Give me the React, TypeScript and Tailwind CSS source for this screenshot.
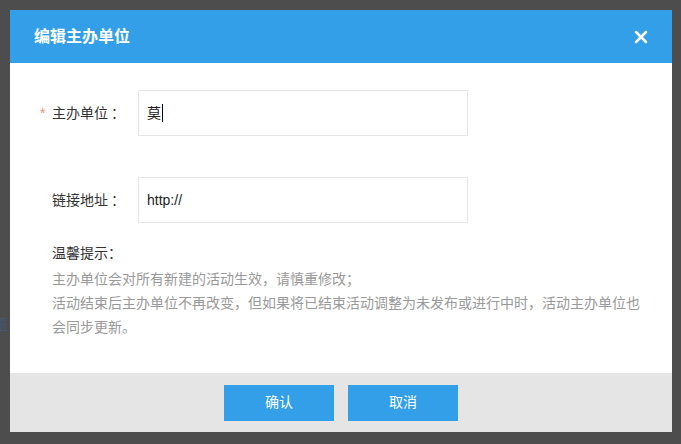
import { X } from "lucide-react";

const font = { fontFamily: '"Liberation Sans", "Noto Sans CJK SC", sans-serif' };

function Field({
  label,
  required,
  children,
}: {
  label: string;
  required?: boolean;
  children: React.ReactNode;
}) {
  return (
    <div className="flex items-center pl-[30px]">
      <span className="w-[12px] text-[14px] leading-none text-[#f08c7c]">
        {required ? "*" : ""}
      </span>
      <span className="w-[86px] text-[14px] text-[#333]">
        {label}
        <span className="ml-[3px]">：</span>
      </span>
      <div className="flex h-[46px] w-[330px] items-center border border-[#e6e6e6] pl-[8px] text-[14px] text-[#222]">
        {children}
      </div>
    </div>
  );
}

export default function App() {
  return (
    <div
      className="relative h-[444px] w-[681px] overflow-hidden bg-[#4d4d4d] p-[10px]"
      style={font}
    >
      {/* page content peeking out from behind the dialog */}
      <span className="absolute left-[-7px] top-[314px] text-[14px] text-[#3d5a78] underline">
        题
      </span>

      <div className="relative flex h-[422px] w-[662px] flex-col bg-white">
        <div className="flex h-[53px] items-center justify-between bg-[#339fe8] pl-[24px] pr-[21px]">
          <h2 className="text-[16px] font-bold text-white">编辑主办单位</h2>
          <X className="h-[20px] w-[20px] text-white" strokeWidth={3} />
        </div>

        <div className="flex-1 pt-[27px]">
          <Field label="主办单位" required>
            <span>莫</span>
            <span className="ml-[1px] h-[18px] w-px bg-black" />
          </Field>
          <div className="h-[41px]" />
          <Field label="链接地址">
            <span>http://</span>
          </Field>

          <div className="mt-[18px] w-[638px] pl-[42px] text-[14px] leading-[24px]">
            <p className="text-[#333]">温馨提示：</p>
            <p className="mt-[2px] text-[#999]">
              主办单位会对所有新建的活动生效，请慎重修改；
              <br />
              活动结束后主办单位不再改变，但如果将已结束活动调整为未发布或进行中时，活动主办单位也会同步更新。
            </p>
          </div>
        </div>

        <div className="flex h-[59px] items-center justify-center gap-[14px] bg-[#e5e5e5]">
          <button className="h-[36px] w-[110px] bg-[#339fe8] text-[14px] text-white">
            确认
          </button>
          <button className="h-[36px] w-[110px] bg-[#339fe8] text-[14px] text-white">
            取消
          </button>
        </div>
      </div>
    </div>
  );
}
